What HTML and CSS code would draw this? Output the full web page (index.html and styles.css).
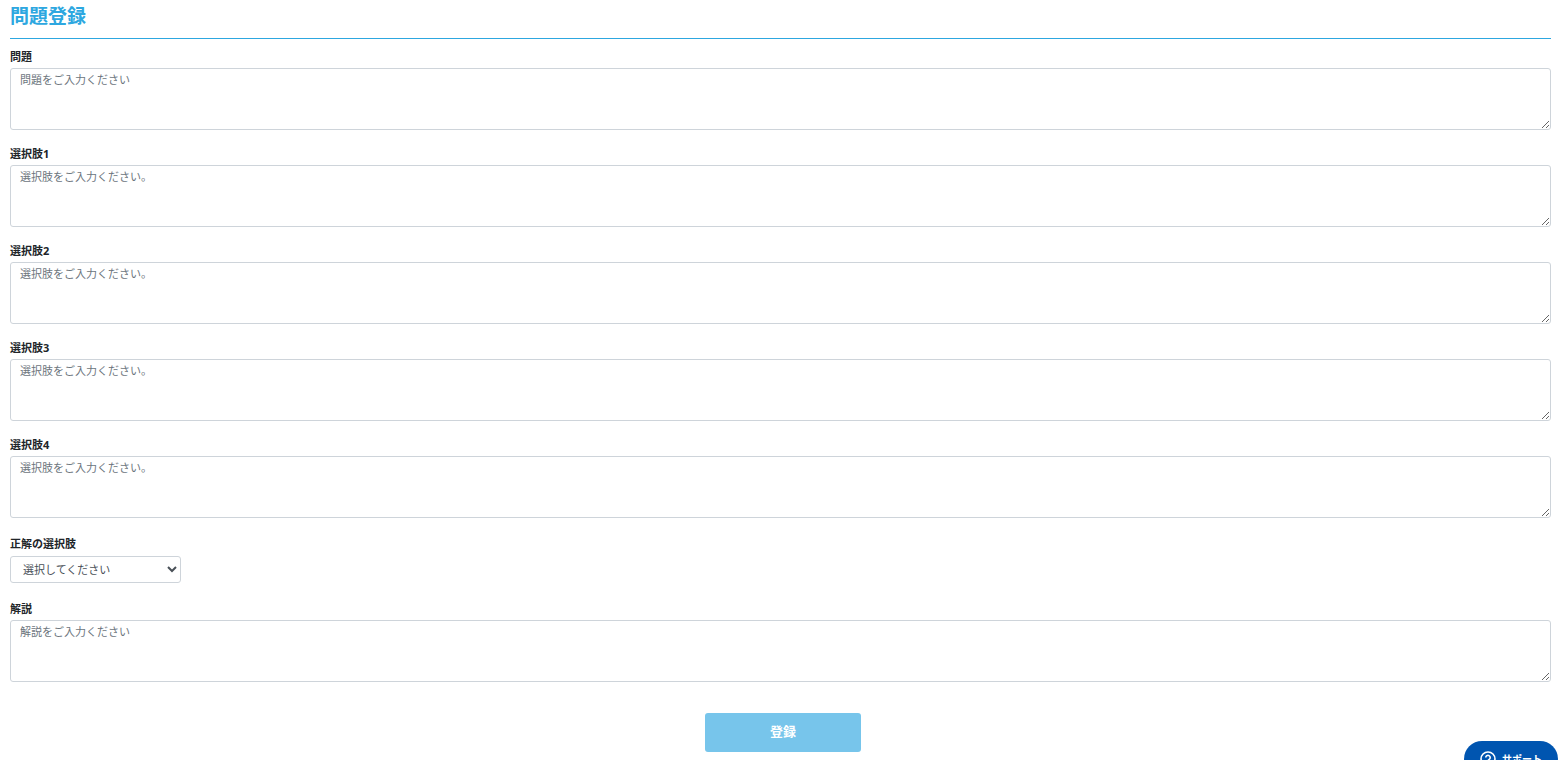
FILE: index.html
```html
<!DOCTYPE html>
<html lang="ja">
<head>
    <meta charset="UTF-8">
    <meta name="viewport" content="width=device-width, initial-scale=1.0">
    <title>問題登録</title>
    <link rel="stylesheet" href="styles.css">
</head>
<body>
    <form class="question_form">
        <h1>問題登録</h1>
        <div class="form_group">
            <label for="question">問題</label>
            <textarea id="question" name="question" rows="3" placeholder="問題をご入力ください"></textarea>
        </div>
        <div class="form_group">
            <label for="choice1">選択肢1</label>
            <textarea id="choice1" name="choice1" rows="3" placeholder="選択肢をご入力ください。"></textarea>
        </div>
        <div class="form_group">
            <label for="choice2">選択肢2</label>
            <textarea id="choice2" name="choice2" rows="3" placeholder="選択肢をご入力ください。"></textarea>
        </div>
        <div class="form_group">
            <label for="choice3">選択肢3</label>
            <textarea id="choice3" name="choice3" rows="3" placeholder="選択肢をご入力ください。"></textarea>
        </div>
        <div class="form_group">
            <label for="choice4">選択肢4</label>
            <textarea id="choice4" name="choice4" rows="3" placeholder="選択肢をご入力ください。"></textarea>
        </div>
        <div class="form_group select_group">
            <label for="answer">正解の選択肢</label>
            <select id="answer" name="answer">
                <option value="">選択してください</option>
                <option value="1">選択肢1</option>
                <option value="2">選択肢2</option>
                <option value="3">選択肢3</option>
                <option value="4">選択肢4</option>
            </select>
        </div>
        <div class="form_group">
            <label for="explanation">解説</label>
            <textarea id="explanation" name="explanation" rows="3" placeholder="解説をご入力ください"></textarea>
        </div>
        <div class="line_submit">
            <button type="submit" class="btn_submit" disabled>登録</button>
        </div>
    </form>

    <button type="button" class="btn_support">
        <svg width="16" height="16" viewBox="0 0 16 16" fill="none" stroke="#fff" stroke-width="1.6" aria-hidden="true">
            <circle cx="8" cy="8" r="7"/>
            <path d="M5.8 6.6a2.2 2.2 0 1 1 3.4 1.8c-.8.5-1.2.8-1.2 1.6M8 11.2v1.5"/>
        </svg>
        サポート
    </button>
</body>
</html>
```
FILE: styles.css
```css
body {
    margin: 0;
    background-color: #fff;
    color: #212529;
    font-family: "Noto Sans", "Noto Sans CJK JP", sans-serif;
    font-size: 11px;
    line-height: 16px;
}
.question_form {
    padding: 4px 15px 8px 10px;
}
h1 {
    margin: 0 0 10px;
    padding-bottom: 10px;
    border-bottom: 1px solid #2da7e0;
    color: #2da7e0;
    font-size: 19px;
    line-height: 24px;
}
.form_group {
    margin-bottom: 16px;
}
label {
    display: block;
    margin-bottom: 3px;
    font-weight: bold;
}
textarea,
select {
    display: block;
    box-sizing: border-box;
    border: 1px solid #ced4da;
    border-radius: 3px;
    background-color: #fff;
    color: #495057;
    font: inherit;
}
textarea {
    width: 100%;
    padding: 3px 9px 9px;
    resize: vertical;
}
textarea::placeholder {
    color: #6c757d;
}
.select_group {
    margin: 18px 0;
}
.select_group label {
    margin-bottom: 4px;
}
select {
    width: 171px;
    height: 27px;
    padding: 0 8px;
}
.line_submit {
    /* 左右の余白の差を打ち消して画面中央に置く */
    margin: 31px -15px 0 -10px;
    text-align: center;
}
.btn_submit {
    width: 156px;
    height: 39px;
    padding: 0 0 3px;
    border: none;
    border-radius: 3px;
    background-color: #77c5eb;
    color: #fff;
    font: inherit;
    font-size: 13px;
    font-weight: bold;
}
.btn_support {
    position: fixed;
    right: 8px;
    bottom: -17px;
    display: flex;
    align-items: center;
    justify-content: center;
    gap: 6px;
    width: 94px;
    height: 36px;
    padding: 0;
    border: none;
    border-radius: 18px;
    background-color: #0055b0;
    color: #fff;
    font: inherit;
    font-size: 10px;
    font-weight: bold;
    cursor: pointer;
}
```
